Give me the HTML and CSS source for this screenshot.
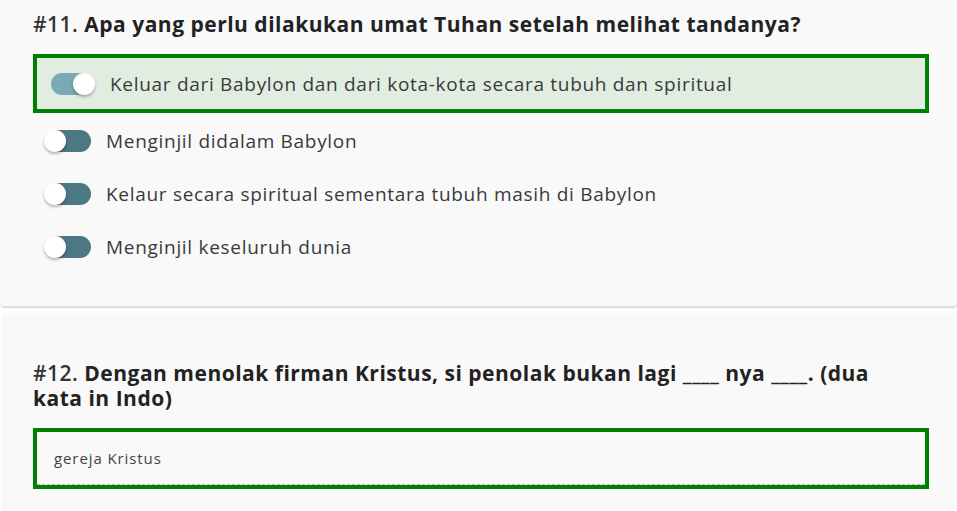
FILE: index.html
```html
<!DOCTYPE html>
<html lang="id">
<head>
<meta charset="utf-8">
<title>Kuis</title>
<link rel="stylesheet" href="styles.css">
</head>
<body>
<div class="page">
  <section class="card card-first">
    <h2 class="question"><span class="qnum">#11.</span> Apa yang perlu dilakukan umat Tuhan setelah melihat tandanya?</h2>
    <div class="options">
      <label class="option option-selected">
        <span class="switch switch-on"><span class="knob"></span></span>
        <span class="option-text">Keluar dari Babylon dan dari kota-kota secara tubuh dan spiritual</span>
      </label>
      <label class="option">
        <span class="switch"><span class="knob"></span></span>
        <span class="option-text">Menginjil didalam Babylon</span>
      </label>
      <label class="option">
        <span class="switch"><span class="knob"></span></span>
        <span class="option-text">Kelaur secara spiritual sementara tubuh masih di Babylon</span>
      </label>
      <label class="option">
        <span class="switch"><span class="knob"></span></span>
        <span class="option-text">Menginjil keseluruh dunia</span>
      </label>
    </div>
  </section>
  <section class="card card-second">
    <h2 class="question question-wrap"><span class="qnum">#12.</span> Dengan menolak firman Kristus, si penolak bukan lagi ____ nya ____. (dua kata in Indo)</h2>
    <div class="answer-box">
      <div class="answer-input">gereja Kristus</div>
    </div>
  </section>
</div>
</body>
</html>
```
FILE: styles.css
```css
html, body {
  margin: 0;
  padding: 0;
  background: #ffffff;
  overflow: hidden;
}
body {
  font-family: "Open Sans", "DejaVu Sans", sans-serif;
  color: #333;
}
.page {
  padding-left: 1px;
  display: flex;
  flex-direction: column;
  gap: 6px;
}
.card {
  background: #f9f9f9;
  border-radius: 4px;
  padding: 0 28px 0 32px;
}
.card-first {
  padding-top: 12px;
  padding-bottom: 33px;
  border-top-left-radius: 0;
  border-top-right-radius: 0;
  box-shadow: 0 1px 1px #d6d6d6;
  border-bottom: 1px solid #e2e2e2;
}
.card-second {
  padding-top: 48px;
  padding-bottom: 30px;
}
.question {
  margin: 0;
  font-size: 21px;
  line-height: 25px;
  letter-spacing: 0.5px;
  font-weight: 700;
  color: #222;
}
.question-wrap {
  max-width: 868px;
}
.qnum {
  font-weight: 600;
  color: #333;
}
.options {
  margin-top: 17px;
  display: flex;
  flex-direction: column;
}
.option {
  display: flex;
  align-items: center;
  gap: 15px;
  height: 53px;
  padding-left: 11px;
}
.option-selected {
  height: 51px;
  border: 4px solid #008000;
  background: #e1ede1;
  margin-bottom: 1px;
}
.option-text {
  font-size: 19px;
  letter-spacing: 0.7px;
  font-weight: 400;
  color: #3a3a3a;
}
.switch {
  position: relative;
  width: 47px;
  height: 22px;
  flex: none;
}
.switch::before {
  content: "";
  position: absolute;
  left: 4px;
  right: 0;
  top: 0;
  bottom: 0;
  border-radius: 11px;
  background: #4b7883;
}
.switch-on::before {
  left: 3px;
  right: 3px;
  background: #7aa8b3;
}
.knob {
  position: absolute;
  top: 0;
  left: 0;
  width: 22px;
  height: 22px;
  border-radius: 50%;
  background: #fff;
  box-shadow: 0 2px 3px rgba(0, 0, 0, 0.28);
}
.switch-on .knob {
  left: auto;
  right: 0;
}
.answer-box {
  margin-top: 17px;
  border: 4px solid #008000;
  background: #f9f9f9;
}
.answer-input {
  height: 52px;
  display: flex;
  align-items: center;
  padding-left: 17px;
  font-size: 15px;
  letter-spacing: 0.9px;
  color: #444;
  border-bottom: 1px dashed #b5b5b5;
}
```
